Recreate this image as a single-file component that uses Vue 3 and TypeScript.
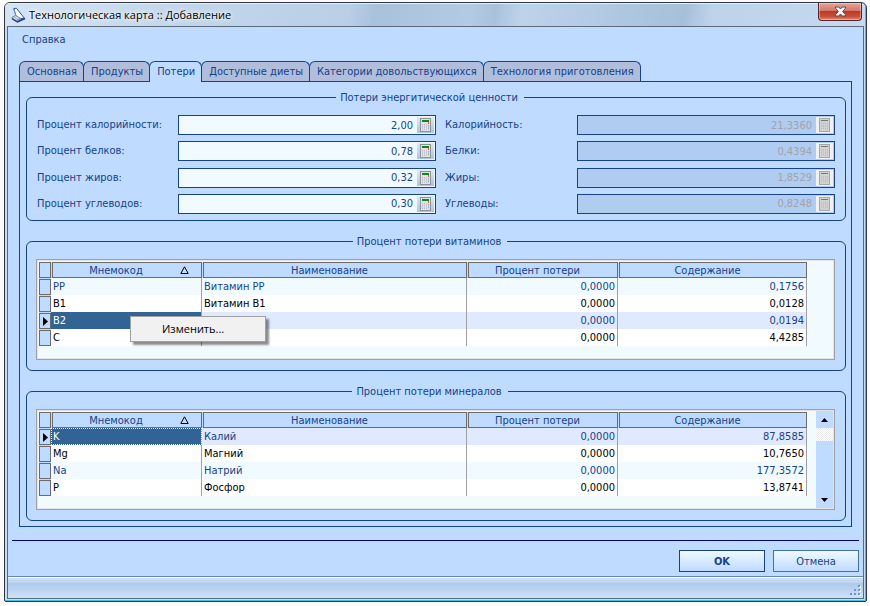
<script setup lang="ts">
import { ref } from 'vue'

interface Loss {
  id: string
  label: string
  value: string
  resultLabel: string
  result: string
}

interface Row {
  code: string
  name: string
  percent: string
  content: string
}

interface Grid {
  id: string
  title: string
  current: number
  focused: boolean
  scroll: boolean
  menu: boolean
  rows: Row[]
}

const tabs: string[] = [
  'Основная',
  'Продукты',
  'Потери',
  'Доступные диеты',
  'Категории довольствующихся',
  'Технология приготовления',
]
const activeTab = ref(2)

const losses = ref<Loss[]>([
  { id: 'cal', label: 'Процент калорийности:', value: '2,00', resultLabel: 'Калорийность:', result: '21,3360' },
  { id: 'protein', label: 'Процент белков:', value: '0,78', resultLabel: 'Белки:', result: '0,4394' },
  { id: 'fat', label: 'Процент жиров:', value: '0,32', resultLabel: 'Жиры:', result: '1,8529' },
  { id: 'carb', label: 'Процент углеводов:', value: '0,30', resultLabel: 'Углеводы:', result: '0,8248' },
])

const grids = ref<Grid[]>([
  {
    id: 'vitamins',
    title: 'Процент потери витаминов',
    current: 2,
    focused: false,
    scroll: false,
    menu: true,
    rows: [
      { code: 'PP', name: 'Витамин PP', percent: '0,0000', content: '0,1756' },
      { code: 'B1', name: 'Витамин B1', percent: '0,0000', content: '0,0128' },
      { code: 'B2', name: '', percent: '0,0000', content: '0,0194' },
      { code: 'C', name: '', percent: '0,0000', content: '4,4285' },
    ],
  },
  {
    id: 'minerals',
    title: 'Процент потери минералов',
    current: 0,
    focused: true,
    scroll: true,
    menu: false,
    rows: [
      { code: 'K', name: 'Калий', percent: '0,0000', content: '87,8585' },
      { code: 'Mg', name: 'Магний', percent: '0,0000', content: '10,7650' },
      { code: 'Na', name: 'Натрий', percent: '0,0000', content: '177,3572' },
      { code: 'P', name: 'Фосфор', percent: '0,0000', content: '13,8741' },
    ],
  },
])
</script>

<template>
  <div class="window">
    <header class="titlebar">
      <svg class="app-icon" width="15" height="16" viewBox="0 0 15 16" aria-hidden="true">
        <path d="M2.8 1.6 L5.4 1.2 L13.2 11 L6 12.5 Z" fill="#fff" stroke="#2d5596" />
        <path d="M2.5 1.5 L5 8.5" stroke="#6f93c6" />
        <path d="M1 11.5 L6.5 14.8 L14 11.6" fill="none" stroke="#16408a" stroke-width="1.6" />
        <path d="M.6 10.6 L4.6 8.2 L9.4 11.2 L6 13.6 Z" fill="#a9b9cc" stroke="#7387a2" stroke-width=".8" />
        <path d="M2.4 10.8 L5.8 12.8 M4 9.6 L7.6 11.8" stroke="#e8f0fa" stroke-width=".8" />
      </svg>
      <h1 class="title">Технологическая карта :: Добавление</h1>
      <button class="close" type="button" aria-label="Закрыть">
        <svg width="13" height="11" viewBox="0 0 13 11" aria-hidden="true">
          <path
            d="M1.5 1 H4.8 L6.5 3 L8.2 1 H11.5 V2.2 L8.7 5.5 L11.5 8.8 V10 H8.2 L6.5 8 L4.8 10 H1.5 V8.8 L4.3 5.5 L1.5 2.2 Z"
            fill="#f4f4f4"
            stroke="#4b4f5c"
          />
        </svg>
      </button>
    </header>

    <div class="client">
      <nav class="menubar"><a href="#">Справка</a></nav>

      <main class="content">
        <div class="tabs" role="tablist">
          <button
            v-for="(tab, i) in tabs"
            :key="tab"
            type="button"
            role="tab"
            class="tab"
            :class="{ active: i === activeTab }"
            :aria-selected="i === activeTab"
            @click="activeTab = i"
          >
            {{ tab }}
          </button>
        </div>

        <section class="panel" role="tabpanel">
          <fieldset class="group">
            <legend>Потери энергитической ценности</legend>
            <div class="fields">
              <template v-for="item in losses" :key="item.id">
                <label :for="item.id">{{ item.label }}</label>
                <div class="edit">
                  <input :id="item.id" v-model="item.value" type="text" />
                  <button type="button" class="calc" aria-label="Калькулятор">
                    <svg width="11" height="14" viewBox="0 0 11 14" aria-hidden="true">
                      <rect x=".5" y=".5" width="10" height="13" fill="#e4e2e6" stroke="#8f9298" />
                      <rect x="2" y="2" width="7" height="2" fill="#0a8a18" />
                      <rect x="8" y="4" width="1" height="2" fill="#e8503a" />
                      <path d="M2.5 6V12M4.5 6V12M6.5 6V12" stroke="#bcbcc6" stroke-dasharray="1.5 .8" />
                      <path d="M8.5 7V12" stroke="#7fa8d8" stroke-dasharray="1.5 .8" />
                    </svg>
                  </button>
                </div>
                <label class="second" :for="item.id + '-r'">{{ item.resultLabel }}</label>
                <div class="edit off">
                  <input :id="item.id + '-r'" v-model="item.result" type="text" disabled />
                  <button type="button" class="calc" aria-label="Калькулятор" disabled>
                    <svg width="11" height="14" viewBox="0 0 11 14" aria-hidden="true">
                      <rect x=".5" y=".5" width="10" height="13" fill="#d2d2d2" stroke="#a8a8a8" />
                      <rect x="2" y="2" width="7" height="1" fill="#777" />
                      <path d="M2.5 5V12M4.5 5V12M6.5 5V12M8.5 5V12" stroke="#bebebe" stroke-dasharray="1.5 .8" />
                    </svg>
                  </button>
                </div>
              </template>
            </div>
          </fieldset>

          <fieldset v-for="grid in grids" :key="grid.id" class="group">
            <legend>{{ grid.title }}</legend>
            <div class="frame">
              <table>
                <colgroup>
                  <col class="c-mark" />
                  <col class="c-code" />
                  <col />
                  <col class="c-percent" />
                  <col class="c-content" />
                </colgroup>
                <thead>
                  <tr>
                    <th class="mark"></th>
                    <th>
                      <div class="sorted">
                        <span>Мнемокод</span>
                        <svg width="9" height="8" viewBox="0 0 9 8" aria-hidden="true">
                          <path d="M4.5 .8 L8.2 7.5 H.8 Z" fill="none" stroke="#000" />
                        </svg>
                      </div>
                    </th>
                    <th>Наименование</th>
                    <th>Процент потери</th>
                    <th>Содержание</th>
                  </tr>
                </thead>
                <tbody>
                  <tr
                    v-for="(row, i) in grid.rows"
                    :key="row.code"
                    :class="{ current: i === grid.current, focused: grid.focused }"
                    @click="grid.current = i"
                  >
                    <td class="mark">
                      <svg v-if="i === grid.current" width="5" height="9" viewBox="0 0 5 9" aria-hidden="true">
                        <path d="M0 0 L5 4.5 L0 9 Z" fill="#000" />
                      </svg>
                    </td>
                    <td class="code">{{ row.code }}</td>
                    <td>{{ row.name }}</td>
                    <td class="num">{{ row.percent }}</td>
                    <td class="num">{{ row.content }}</td>
                  </tr>
                </tbody>
              </table>
              <div v-if="grid.scroll" class="scrollbar">
                <button type="button" aria-label="Вверх">
                  <svg width="7" height="4" viewBox="0 0 7 4" aria-hidden="true"><path d="M0 4 L3.5 0 L7 4 Z" /></svg>
                </button>
                <span class="thumb"></span>
                <button type="button" class="down" aria-label="Вниз">
                  <svg width="7" height="4" viewBox="0 0 7 4" aria-hidden="true"><path d="M0 0 L3.5 4 L7 0 Z" /></svg>
                </button>
              </div>
              <div v-if="grid.menu" class="popup" role="menu">
                <button type="button" role="menuitem">Изменить...</button>
              </div>
            </div>
          </fieldset>
        </section>
      </main>

      <div class="actions">
        <button type="button" class="default">OK</button>
        <button type="button">Отмена</button>
      </div>

      <footer class="status">
        <svg width="11" height="11" viewBox="0 0 11 11" aria-hidden="true">
          <path
            d="M8 0h2v2h-2zM4 4h2v2h-2zM8 4h2v2h-2zM0 8h2v2h-2zM4 8h2v2h-2zM8 8h2v2h-2z"
            fill="#6f93cd"
          />
          <path d="M10 1v1h-1v1h2v-2zM10 5v1h-1v1h2v-2zM10 9v1h-1v1h2v-2z" fill="#fff" />
        </svg>
      </footer>
    </div>
  </div>
</template>

<style>
body {
  margin: 0;
  background: #fdfafb;
}
</style>

<style scoped>
* {
  box-sizing: border-box;
}

.window {
  display: flow-root;
  margin: 2px 3px 4px 4px;
  padding: 0 2px 2px;
  border: 1px solid #2f3640;
  border-radius: 6px 6px 2px 2px;
  background: #c9dbee;
  box-shadow: inset -1px -1px 0 #3fc4ee;
  color: #15428b;
  font: 11px/13px 'DejaVu Sans Condensed', 'DejaVu Sans', sans-serif;
}

button,
input {
  font: inherit;
  color: inherit;
}

.titlebar {
  display: flex;
  align-items: center;
  height: 23px;
  margin: 0 -1px 0 -2px;
  padding: 0 3px 0 6px;
  border-top: 1px solid #e4eef8;
  border-radius: 5px 5px 0 0;
  background: linear-gradient(
    100deg,
    #d5e4f3 0%,
    #c3d7eb 20%,
    #b9cfe6 40%,
    #a9c2dc 43%,
    #b2cae3 54%,
    #a9c2dc 57%,
    #bdd3ea 60%,
    #aec7e0 72%,
    #a7c0da 79%,
    #bdd3e9 82%,
    #c5daef 100%
  );
}

.app-icon {
  margin-right: 3px;
}

.title {
  flex: 1;
  margin: 0;
  color: #000;
  font: 11px/16px 'Open Sans', 'Noto Sans', sans-serif;
  text-shadow: 0 0 5px #fff, 0 0 5px #fff;
}

.close {
  display: flex;
  align-self: flex-start;
  align-items: center;
  justify-content: center;
  width: 44px;
  height: 18px;
  margin-top: -1px;
  padding: 0;
  border: 1px solid #56242a;
  border-top: 0;
  border-radius: 0 0 4px 4px;
  background: linear-gradient(#e3a596 0%, #d5796a 45%, #bb3a26 50%, #c9503a 80%, #dd8a70 100%);
  box-shadow: inset 0 0 0 1px rgba(255, 255, 255, 0.35);
}

.client {
  border: 1px solid #5c6a7d;
  background: #bfdbff;
}

.menubar {
  padding: 6px 14px 15px;
}

.menubar a {
  color: inherit;
  text-decoration: none;
}

.content {
  padding: 0 11px;
}

.tabs {
  display: flex;
  height: 20px;
}

.tab {
  margin: 0 0 0 -1px;
  padding: 0 6px 0 7px;
  border: 1px solid #15428b;
  border-bottom: 0;
  border-radius: 6px 6px 0 0;
  background: #b0bedb;
}

.tab:first-child {
  margin-left: 0;
}

.tab.active {
  margin-bottom: -1px;
  padding-bottom: 1px;
  background: #bfdbff;
}

.panel {
  display: flex;
  flex-direction: column;
  gap: 14px;
  padding: 9px 5px 5px 6px;
  border: 1px solid #15428b;
}

.group {
  min-width: 0;
  margin: 0;
  padding: 0 12px 10px 0;
  border: 1px solid #15428b;
  border-radius: 6px;
}

legend {
  margin: 0 auto;
  padding: 0 6px 0 4px;
}

.fields {
  display: grid;
  grid-template-columns: 141px 1fr 141px 1fr;
  align-content: space-between;
  min-height: 99px;
  margin: 11px -2px -4px 10px;
}

.fields label {
  line-height: 20px;
}

.fields .second {
  padding-left: 9px;
}

.edit {
  display: flex;
  height: 20px;
  padding: 1px;
  border: 1px solid #15428b;
  background: #f0faff;
}

.edit input {
  flex: 1;
  min-width: 0;
  padding: 0 4px 0 0;
  border: 0;
  background: none;
  text-align: right;
}

.edit input:focus {
  outline: none;
}

.calc {
  display: flex;
  align-items: center;
  justify-content: center;
  width: 17px;
  padding: 0;
  border: 0;
  background: linear-gradient(#dcebf8, #a9c5e2);
}

.edit.off {
  background: #b0ccf1;
  color: #a0a4aa;
}

.edit.off .calc {
  background: #f1f1f1;
}

.frame {
  position: relative;
  display: grid;
  grid-template-columns: 1fr 17px;
  column-gap: 9px;
  min-height: 101px;
  margin: 11px -2px 0 9px;
  padding: 0;
  border: 1px solid #a0a0a0;
  background: #f0faff;
  box-shadow: inset 0 0 0 1px #e3e3e3;
}

table {
  align-self: start;
  width: calc(100% - 3px);
  margin: 2px 0 0 2px;
  border-spacing: 0;
  table-layout: fixed;
}

.c-mark {
  width: 12px;
}

.c-code,
.c-percent {
  width: 151px;
}

.c-content {
  width: 189px;
}

th {
  height: 16px;
  padding: 0 11px 0 0;
  border-left: 1px solid #bfdbff;
  background: #bfdbff;
  box-shadow: inset 0 0 0 1px #6b6b6b;
  font-weight: normal;
}

th.mark {
  padding: 0;
  border-left: 0;
}

.sorted {
  display: flex;
  align-items: center;
  margin-right: 2px;
}

.sorted span {
  flex: 1;
}

td {
  height: 17px;
  padding: 0 2px;
  border-right: 1px solid #a0a0a0;
  white-space: nowrap;
}

td.mark {
  padding: 0 0 0 4px;
  border-top: 1px solid #bfdbff;
  border-right: 0;
  background: #bfdbff;
  box-shadow: inset 0 0 0 1px #6b6b6b;
}

td.mark svg {
  display: block;
}

td.num {
  text-align: right;
}

tbody tr:nth-child(even) {
  background: #fff;
  color: #000;
}

tbody tr.current {
  background: #dfe9ff;
  color: #15428b;
}

.current .code {
  background: #316395;
  color: #fff;
}

.current.focused .code {
  outline: 1px dotted #fff;
  outline-offset: -1px;
}

.scrollbar {
  display: flex;
  flex-direction: column;
  margin: 1px 1px 1px -1px;
  background: #bfdbff;
}

.scrollbar button {
  display: flex;
  align-items: center;
  justify-content: center;
  height: 17px;
  padding: 0;
  border: 0;
  background: none;
}

.scrollbar .down {
  margin-top: auto;
}

.thumb {
  height: 13px;
  background: repeating-conic-gradient(#fff 0 25%, #ececec 0 50%) 0 0 / 2px 2px;
}

.popup {
  position: absolute;
  top: 56px;
  left: 93px;
  width: 136px;
  border: 1px solid #a0a0a0;
  background: #f1f1f1;
  box-shadow: 3px 3px 2px rgba(0, 0, 0, 0.45);
}

.popup button {
  display: block;
  width: 100%;
  height: 24px;
  padding: 0 0 0 31px;
  border: 0;
  background: none;
  color: #000;
  font: 11px/16px 'Open Sans', 'Noto Sans', sans-serif;
  text-align: left;
}

.actions {
  display: flex;
  justify-content: flex-end;
  gap: 8px;
  margin: 13px 4px 4px;
  padding-top: 9px;
  border-top: 1px solid #000080;
}

.actions button {
  width: 86px;
  height: 22px;
  padding: 0;
  border: 1px solid #3f73b0;
  background: linear-gradient(#f0faff, #bfdbff);
}

.actions .default {
  border-color: #15428b;
  font-weight: bold;
}

.status {
  display: flex;
  align-items: flex-end;
  justify-content: flex-end;
  height: 22px;
  padding: 0 2px 2px;
  border-top: 1px solid #6483b9;
  background: linear-gradient(#fff 0 1px, #cfe0f6 1px, #bdd3f1 6px, #abc9ee 6px, #cfe1f8 100%);
}
</style>
